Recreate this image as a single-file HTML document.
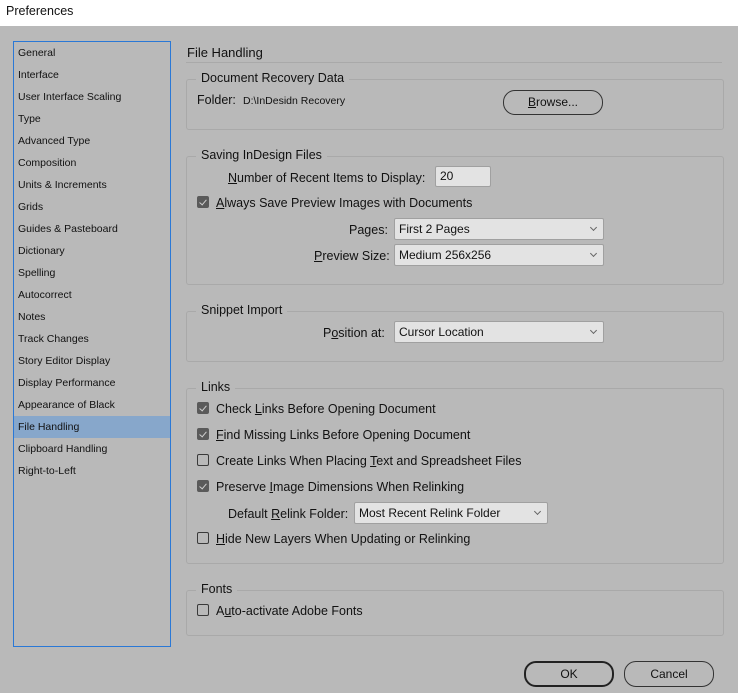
<!DOCTYPE html>
<html><head><style>
*{margin:0;padding:0;box-sizing:border-box}
body{width:738px;height:693px;background:#b9b9b9;font-family:"Liberation Sans",sans-serif;color:#111;position:relative;overflow:hidden;font-size:12px}
.a{position:absolute;white-space:nowrap}
.title{left:0;top:0;width:738px;height:26px;background:#fff;font-size:12.5px;padding:4px 0 0 6px}
.side{left:13px;top:41px;width:158px;height:606px;border:1px solid #2a78d6}
.si{position:absolute;left:4px;font-size:10.5px;height:22px;line-height:22px}
.sel{left:0;width:156px;background:#87a7cb}
.grp{position:absolute;border:1px solid #a9a9a9;border-radius:3px;left:186px;width:538px}
.gl{position:absolute;background:#b9b9b9;padding:0 5px;font-size:12.5px;left:9px;top:-9px}
.cb{position:absolute;width:12px;height:12px;border:1px solid #3a3a3a;border-radius:2px}
.cb.on{background:#5a5a5a;border-color:#5a5a5a}
.cb.on:after{content:"";position:absolute;left:3px;top:1px;width:3px;height:6px;border:solid #cfcfcf;border-width:0 1.6px 1.6px 0;transform:rotate(40deg)}
.dd{position:absolute;height:22px;background:#e3e3e3;border:1px solid #a0a0a0;border-radius:2px;padding:3px 0 0 4px;font-size:12px}
.dd:after{content:"";position:absolute;right:7px;top:6px;width:4px;height:4px;border:solid #666;border-width:0 1px 1px 0;transform:rotate(45deg)}
.btn{position:absolute;border:1px solid #333;border-radius:12px;text-align:center;font-size:12px}
u{text-decoration:underline}
</style></head><body>
<div class="a title">Preferences</div>
<div class="a side">
<div class="si" style="top:0">General</div>
<div class="si" style="top:22px">Interface</div>
<div class="si" style="top:44px">User Interface Scaling</div>
<div class="si" style="top:66px">Type</div>
<div class="si" style="top:88px">Advanced Type</div>
<div class="si" style="top:110px">Composition</div>
<div class="si" style="top:132px">Units &amp; Increments</div>
<div class="si" style="top:154px">Grids</div>
<div class="si" style="top:176px">Guides &amp; Pasteboard</div>
<div class="si" style="top:198px">Dictionary</div>
<div class="si" style="top:220px">Spelling</div>
<div class="si" style="top:242px">Autocorrect</div>
<div class="si" style="top:264px">Notes</div>
<div class="si" style="top:286px">Track Changes</div>
<div class="si" style="top:308px">Story Editor Display</div>
<div class="si" style="top:330px">Display Performance</div>
<div class="si" style="top:352px">Appearance of Black</div>
<div class="si sel" style="top:374px;padding-left:4px">File Handling</div>
<div class="si" style="top:396px">Clipboard Handling</div>
<div class="si" style="top:418px">Right-to-Left</div>
</div>
<div class="a" style="left:187px;top:45px;font-size:13px">File Handling</div>
<div class="a" style="left:186px;top:62px;width:536px;height:1px;background:#a9a9a9"></div>

<div class="grp" style="top:79px;height:51px"><div class="gl">Document Recovery Data</div></div>
<div class="a" style="left:197px;top:93px;font-size:12.5px">Folder:</div>
<div class="a" style="left:243px;top:95px;font-size:10.5px">D:\InDesidn Recovery</div>
<div class="btn" style="left:503px;top:90px;width:100px;height:25px;line-height:23px"><u>B</u>rowse...</div>

<div class="grp" style="top:156px;height:129px"><div class="gl">Saving InDesign Files</div></div>
<div class="a" style="left:228px;top:171px;font-size:12.5px"><u>N</u>umber of Recent Items to Display:</div>
<div class="a" style="left:435px;top:166px;width:56px;height:21px;background:#e3e3e3;border:1px solid #a0a0a0;border-radius:2px;padding:2px 4px">20</div>
<div class="cb on" style="left:197px;top:196px"></div>
<div class="a" style="left:216px;top:196px;font-size:12.5px"><u>A</u>lways Save Preview Images with Documents</div>
<div class="a" style="left:349px;top:223px;font-size:12.5px">Pa<u>g</u>es:</div>
<div class="dd" style="left:394px;top:218px;width:210px">First 2 Pages</div>
<div class="a" style="left:314px;top:249px;font-size:12.5px"><u>P</u>review Size:</div>
<div class="dd" style="left:394px;top:244px;width:210px">Medium 256x256</div>

<div class="grp" style="top:311px;height:51px"><div class="gl">Snippet Import</div></div>
<div class="a" style="left:323px;top:326px;font-size:12.5px">P<u>o</u>sition at:</div>
<div class="dd" style="left:394px;top:321px;width:210px">Cursor Location</div>

<div class="grp" style="top:388px;height:176px"><div class="gl">Links</div></div>
<div class="cb on" style="left:197px;top:402px"></div>
<div class="a" style="left:216px;top:402px;font-size:12.5px">Check <u>L</u>inks Before Opening Document</div>
<div class="cb on" style="left:197px;top:428px"></div>
<div class="a" style="left:216px;top:428px;font-size:12.5px"><u>F</u>ind Missing Links Before Opening Document</div>
<div class="cb" style="left:197px;top:454px"></div>
<div class="a" style="left:216px;top:454px;font-size:12.5px">Create Links When Placing <u>T</u>ext and Spreadsheet Files</div>
<div class="cb on" style="left:197px;top:480px"></div>
<div class="a" style="left:216px;top:480px;font-size:12.5px">Preserve <u>I</u>mage Dimensions When Relinking</div>
<div class="a" style="left:228px;top:507px;font-size:12.5px">Default <u>R</u>elink Folder:</div>
<div class="dd" style="left:354px;top:502px;width:194px">Most Recent Relink Folder</div>
<div class="cb" style="left:197px;top:532px"></div>
<div class="a" style="left:216px;top:532px;font-size:12.5px"><u>H</u>ide New Layers When Updating or Relinking</div>

<div class="grp" style="top:590px;height:46px"><div class="gl">Fonts</div></div>
<div class="cb" style="left:197px;top:604px"></div>
<div class="a" style="left:216px;top:604px;font-size:12.5px">A<u>u</u>to-activate Adobe Fonts</div>

<div class="btn" style="left:524px;top:661px;width:90px;height:26px;line-height:23px;border:2px solid #222">OK</div>
<div class="btn" style="left:624px;top:661px;width:90px;height:26px;line-height:24px">Cancel</div>
</body></html>
